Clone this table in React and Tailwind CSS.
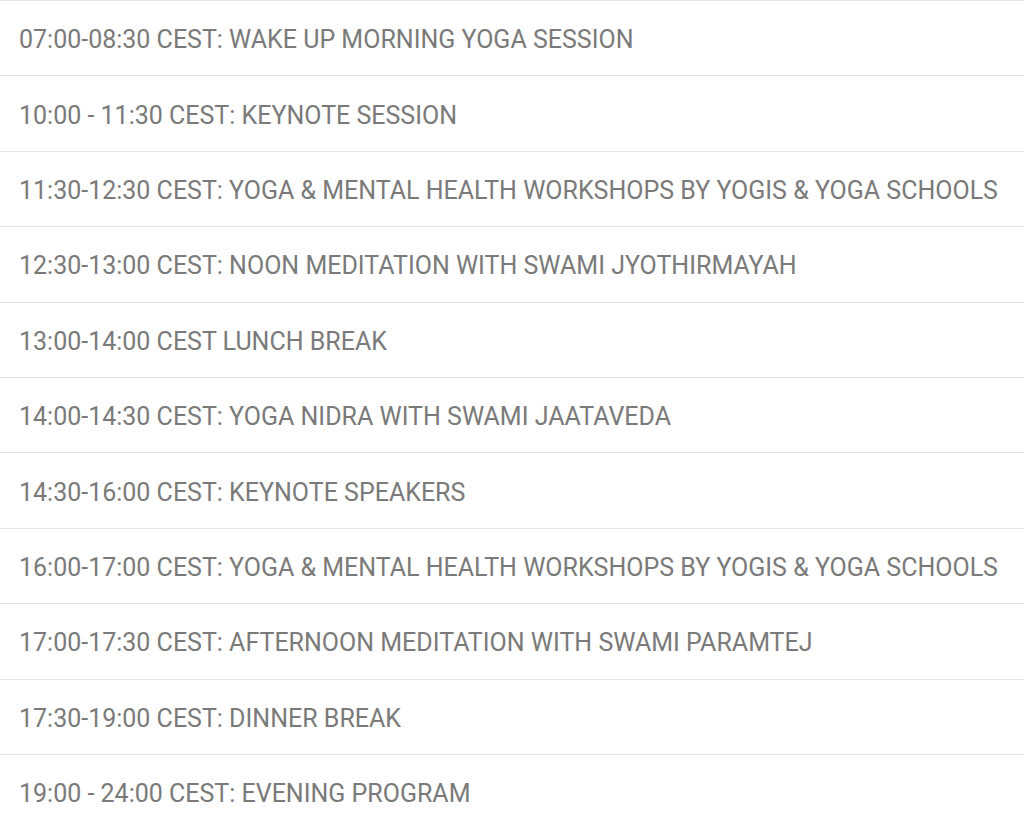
const items = [
  "07:00-08:30 CEST: WAKE UP MORNING YOGA SESSION",
  "10:00 - 11:30 CEST: KEYNOTE SESSION",
  "11:30-12:30 CEST: YOGA & MENTAL HEALTH WORKSHOPS BY YOGIS & YOGA SCHOOLS",
  "12:30-13:00 CEST: NOON MEDITATION WITH SWAMI JYOTHIRMAYAH",
  "13:00-14:00 CEST LUNCH BREAK",
  "14:00-14:30 CEST: YOGA NIDRA WITH SWAMI JAATAVEDA",
  "14:30-16:00 CEST: KEYNOTE SPEAKERS",
  "16:00-17:00 CEST: YOGA & MENTAL HEALTH WORKSHOPS BY YOGIS & YOGA SCHOOLS",
  "17:00-17:30 CEST: AFTERNOON MEDITATION WITH SWAMI PARAMTEJ",
  "17:30-19:00 CEST: DINNER BREAK",
  "19:00 - 24:00 CEST: EVENING PROGRAM",
];

export default function App() {
  return (
    <div className="min-h-screen bg-white font-['Roboto',sans-serif]">
      {items.map((item) => (
        <div
          key={item}
          className="flex h-[75.4px] items-center border-t border-[#e4e4e4] pl-[19px] pt-[3px]"
        >
          <span className="whitespace-nowrap text-[25px] leading-none text-[#7a7a7a]">
            {item}
          </span>
        </div>
      ))}
    </div>
  );
}
